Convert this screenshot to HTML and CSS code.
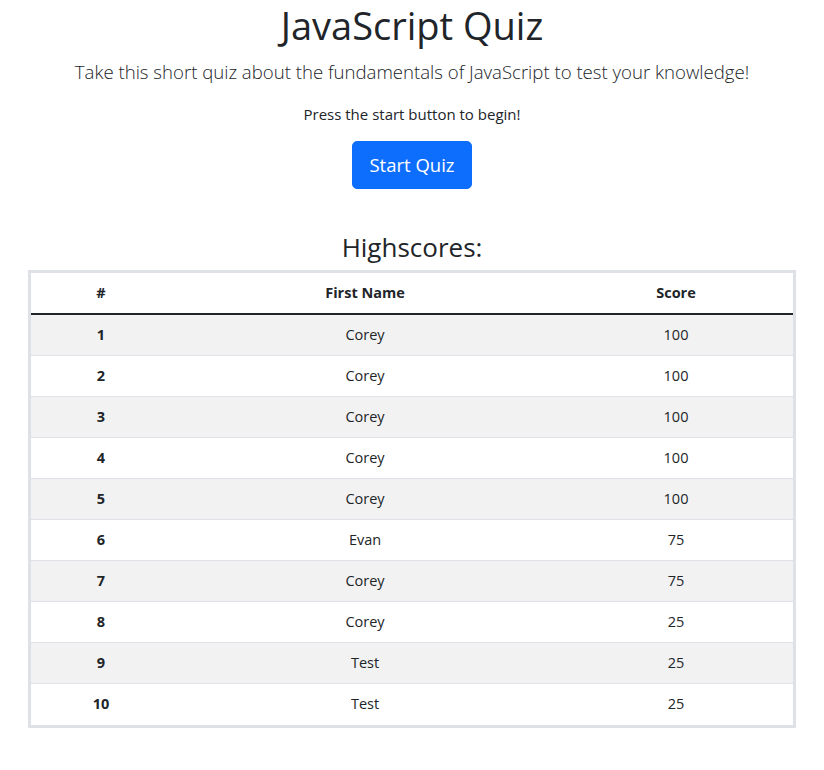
FILE: index.html
```html
<!DOCTYPE html>
<html lang="en">
<head>
<meta charset="utf-8">
<title>JavaScript Quiz</title>
<link rel="stylesheet" href="styles.css">
</head>
<body>
<main class="page">
  <h1 class="title">JavaScript Quiz</h1>
  <p class="lead">Take this short quiz about the fundamentals of JavaScript to test your knowledge!</p>
  <p class="hint">Press the start button to begin!</p>
  <div class="actions"><button class="btn">Start Quiz</button></div>
  <h3 class="sub">Highscores:</h3>
  <div class="table-wrap">
    <table class="scores">
      <thead>
        <tr><th class="c1">#</th><th class="c2">First Name</th><th class="c3">Score</th></tr>
      </thead>
      <tbody>
        <tr><th>1</th><td>Corey</td><td>100</td></tr>
        <tr><th>2</th><td>Corey</td><td>100</td></tr>
        <tr><th>3</th><td>Corey</td><td>100</td></tr>
        <tr><th>4</th><td>Corey</td><td>100</td></tr>
        <tr><th>5</th><td>Corey</td><td>100</td></tr>
        <tr><th>6</th><td>Evan</td><td>75</td></tr>
        <tr><th>7</th><td>Corey</td><td>75</td></tr>
        <tr><th>8</th><td>Corey</td><td>25</td></tr>
        <tr><th>9</th><td>Test</td><td>25</td></tr>
        <tr><th>10</th><td>Test</td><td>25</td></tr>
      </tbody>
    </table>
  </div>
</main>
</body>
</html>
```
FILE: styles.css
```css
* { box-sizing: border-box; }
body {
  margin: 0;
  font-family: "Open Sans", "Noto Sans", sans-serif;
  color: #212529;
  background: #fff;
  font-size: 15px;
  line-height: 24px;
}
.page {
  display: flex;
  flex-direction: column;
  align-items: center;
  text-align: center;
}
.title {
  font-size: 38px;
  font-weight: 400;
  line-height: 44px;
  margin: 3px 0 10px;
}
.lead {
  font-size: 18.6px;
  font-weight: 300;
  line-height: 30px;
  margin: 0 0 15px;
}
.hint {
  margin: 0 0 15px;
  font-size: 15px;
}
.actions { margin: 0 0 41px; }
.btn {
  font-family: inherit;
  font-size: 18.5px;
  line-height: 30px;
  color: #fff;
  background: #0d6efd;
  border: 1px solid #0d6efd;
  border-radius: 5px;
  padding: 8px 16px;
  height: 48px;
  width: 120px;
}
.sub {
  font-size: 26px;
  font-weight: 400;
  line-height: 34px;
  margin: 0 0 6px;
}
.table-wrap {
  align-self: stretch;
  margin: 0 28px;
  border: 3px solid #dee2e6;
}
.scores {
  width: 100%;
  border-collapse: collapse;
}
.scores th, .scores td {
  padding: 8px;
  height: 41px;
  text-align: center;
  font-size: 14.5px;
  border-top: 1px solid #dee2e6;
}
.scores th { font-weight: 700; }
.scores thead th {
  border-top: none;
  border-bottom: 2px solid #212529;
  height: 40px;
}
.scores tbody tr:first-child th, .scores tbody tr:first-child td { border-top: none; }
.scores tbody tr:nth-child(odd) { background: #f2f2f2; }
.c1 { width: 140px; }
.c2 { width: 388px; }
```
